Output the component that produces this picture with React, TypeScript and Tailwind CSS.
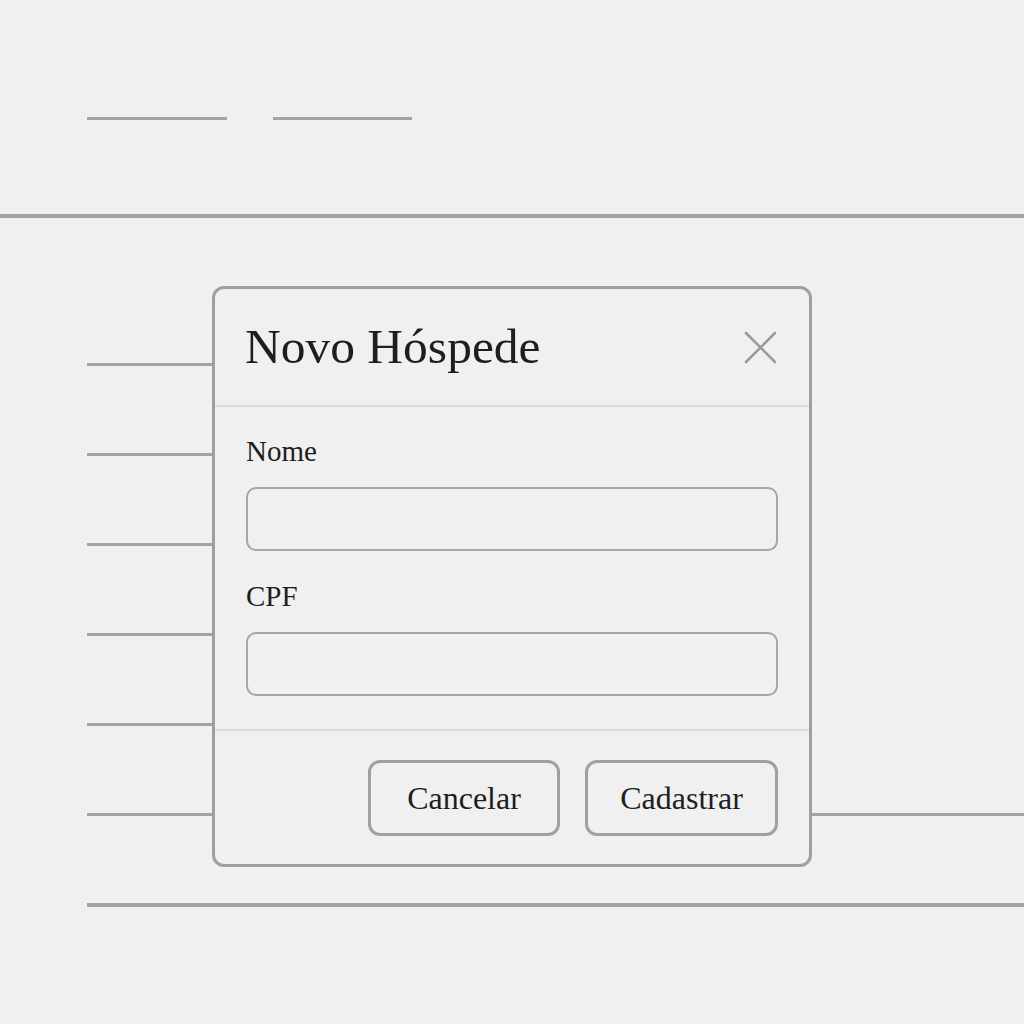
import React from 'react';

const serif = { fontFamily: '"Liberation Serif", "Times New Roman", serif' };

const CloseIcon: React.FC = () => (
  <svg width="33" height="33" viewBox="0 0 33 33" fill="none">
    <path d="M2 2L31 31M31 2L2 31" stroke="#9a9a9a" strokeWidth="2.6" strokeLinecap="round" />
  </svg>
);

const Field: React.FC<{ label: string; first?: boolean }> = ({ label, first }) => (
  <div className={first ? 'flex flex-col' : 'flex flex-col mt-[29px]'}>
    <label className="text-[29px] leading-[32px] text-[#1e1e1e]">{label}</label>
    <input
      type="text"
      className="mt-[20px] h-[64px] w-full rounded-[10px] border-2 border-[#a6a6a6] bg-[#f0f0f0] outline-none"
    />
  </div>
);

export default function App() {
  return (
    <div className="relative min-h-screen w-full overflow-hidden bg-[#f0f0f0]" style={serif}>
      {/* Top nav placeholder */}
      <nav className="flex gap-[46px] pl-[87px] pt-[117px]">
        <div className="h-[3px] w-[140px] bg-[#a3a3a3]" />
        <div className="h-[3px] w-[139px] bg-[#a3a3a3]" />
      </nav>
      <div className="mt-[94px] h-[4px] w-full bg-[#a3a3a3]" />

      {/* List rows */}
      <div className="flex flex-col gap-[87px] pl-[87px] pt-[145px]">
        <div className="h-[3px] w-[125px] bg-[#a3a3a3]" />
        <div className="h-[3px] w-[125px] bg-[#a3a3a3]" />
        <div className="h-[3px] w-[125px] bg-[#a3a3a3]" />
        <div className="h-[3px] w-[125px] bg-[#a3a3a3]" />
        <div className="h-[3px] w-[125px] bg-[#a3a3a3]" />
        <div className="h-[3px] w-full bg-[#a3a3a3]" />
        <div className="h-[4px] w-full bg-[#a3a3a3]" />
      </div>

      {/* Dialog */}
      <div className="absolute left-[212px] top-[286px] flex w-[600px] flex-col rounded-[12px] border-[3px] border-[#a0a0a0] bg-[#f0f0f0]">
        <div className="flex h-[116px] items-center justify-between pl-[30px] pr-[32px]">
          <h2 className="text-[49.5px] leading-[50px] text-[#1e1e1e]">Novo Hóspede</h2>
          <button className="flex items-center justify-center">
            <CloseIcon />
          </button>
        </div>
        <div className="h-[2px] w-full bg-[#dadada]" />
        <div className="flex h-[322px] flex-col px-[31px] pt-[28px]">
          <Field label="Nome" first />
          <Field label="CPF" />
        </div>
        <div className="h-[2px] w-full bg-[#dadada]" />
        <div className="flex h-[133px] items-start justify-end gap-[25px] px-[31px] pt-[29px]">
          <button className="h-[76px] w-[192px] rounded-[12px] border-[3px] border-[#a0a0a0] text-[32px] text-[#1e1e1e]">
            Cancelar
          </button>
          <button className="h-[76px] w-[193px] rounded-[12px] border-[3px] border-[#a0a0a0] text-[32px] text-[#1e1e1e]">
            Cadastrar
          </button>
        </div>
      </div>
    </div>
  );
}
